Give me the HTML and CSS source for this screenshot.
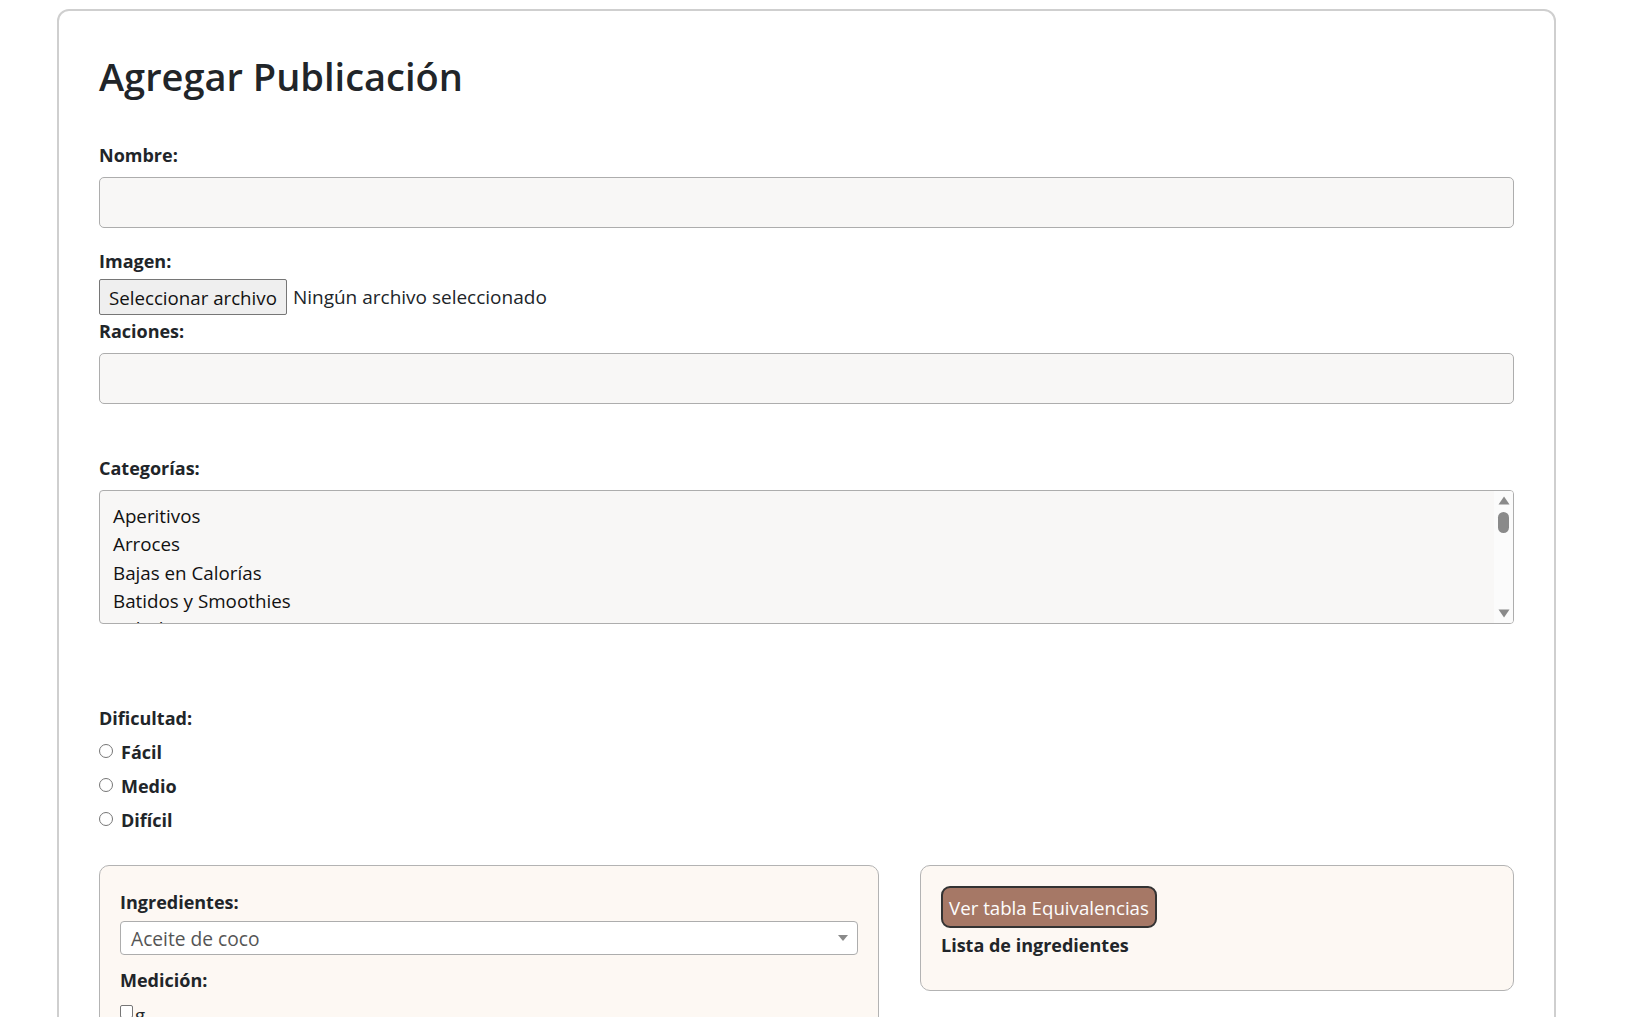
FILE: index.html
```html
<!DOCTYPE html>
<html lang="es">
<head>
<meta charset="utf-8">
<title>Agregar Publicación</title>
<link rel="stylesheet" href="styles.css">
</head>
<body>
<div class="card">
  <h1 class="title">Agregar Publicación</h1>
  <form class="form">
    <label class="lbl lbl-field" for="nombre">Nombre:</label>
    <input class="field field-nombre" id="nombre" type="text">

    <label class="lbl lbl-file">Imagen:</label>
    <div class="file-row">
      <span class="file-btn">Seleccionar archivo</span>
      <span class="file-name">Ningún archivo seleccionado</span>
    </div>

    <label class="lbl lbl-field" for="raciones">Raciones:</label>
    <input class="field field-raciones" id="raciones" type="text">

    <label class="lbl lbl-field">Categorías:</label>
    <div class="listbox" role="listbox">
      <div class="options">
        <div class="option">Aperitivos</div>
        <div class="option">Arroces</div>
        <div class="option">Bajas en Calorías</div>
        <div class="option">Batidos y Smoothies</div>
        <div class="option">Bebidas</div>
        <div class="option">Carnes</div>
      </div>
      <div class="scrollbar">
        <svg class="sb-arrow" width="12" height="9" viewBox="0 0 12 9"><path d="M6 0.5 L11.5 8.5 L0.5 8.5 Z" fill="#8a8a8a"/></svg>
        <div class="sb-thumb"></div>
        <div class="sb-space"></div>
        <svg class="sb-arrow" width="12" height="9" viewBox="0 0 12 9"><path d="M0.5 0.5 L11.5 0.5 L6 8.5 Z" fill="#8a8a8a"/></svg>
      </div>
    </div>

    <div class="lbl lbl-dif">Dificultad:</div>
    <div class="radios">
      <label class="radio-row"><span class="radio"></span>Fácil</label>
      <label class="radio-row"><span class="radio"></span>Medio</label>
      <label class="radio-row"><span class="radio"></span>Difícil</label>
    </div>

    <div class="panels">
      <div class="panel panel-ing">
        <div class="lbl lbl-ing">Ingredientes:</div>
        <div class="dropdown">
          <span class="dropdown-text">Aceite de coco</span>
          <svg class="dropdown-arrow" width="10" height="6" viewBox="0 0 10 6"><path d="M0 0 L10 0 L5 6 Z" fill="#8a8a8a"/></svg>
        </div>
        <div class="lbl lbl-med">Medición:</div>
        <div class="checks">
          <label class="check-row"><span class="check"></span>g</label>
          <label class="check-row"><span class="check"></span>kg</label>
          <label class="check-row"><span class="check"></span>ml</label>
        </div>
      </div>
      <div class="panel panel-eq">
        <button type="button" class="eq-btn">Ver tabla Equivalencias</button>
        <div class="lbl lbl-list">Lista de ingredientes</div>
      </div>
    </div>
  </form>
</div>
</body>
</html>
```

FILE: styles.css
```css
html {
  scrollbar-width: none;
}

body {
  margin: 0;
  background: #ffffff;
  color: #212529;
  font-family: "Open Sans", "Noto Sans", sans-serif;
}

.card {
  box-sizing: border-box;
  width: 1499px;
  margin: 9px 0 0 57px;
  border: 2px solid #cfcfcf;
  border-radius: 12px;
  padding: 41px 40px 60px 40px;
}

.title {
  margin: 0 0 43px 0;
  font-size: 38px;
  line-height: 48px;
  font-weight: 600;
}

.form {
  display: flex;
  flex-direction: column;
}

.lbl {
  display: block;
  font-size: 18px;
  line-height: 24px;
  font-weight: 700;
}

.lbl-field {
  margin-bottom: 10px;
}

.lbl-file {
  margin-bottom: 6px;
}

.field {
  box-sizing: border-box;
  height: 51px;
  width: 100%;
  margin: 0;
  border: 1px solid #adadad;
  border-radius: 5px;
  background: #f8f7f6;
}

.field-nombre {
  margin-bottom: 21px;
}

.field-raciones {
  margin-bottom: 52px;
}

.file-row {
  display: flex;
  align-items: center;
  gap: 6px;
  height: 36px;
  margin-bottom: 4px;
}

.file-btn {
  box-sizing: border-box;
  height: 36px;
  display: flex;
  align-items: center;
  padding: 0 9px;
  background: #efefef;
  border: 1px solid #767676;
  border-radius: 2px;
  color: #111;
  font-size: 18.7px;
}

.file-name {
  color: #212529;
  font-size: 19px;
}

.listbox {
  box-sizing: border-box;
  height: 134px;
  display: flex;
  border: 1px solid #adadad;
  border-radius: 4px;
  background: #f8f7f6;
  overflow: hidden;
  margin-bottom: 82px;
}

.options {
  flex: 1;
  padding: 11px 0 0 13px;
  overflow: hidden;
  font-size: 18.8px;
}

.option {
  line-height: 28.33px;
  color: #111;
}

.scrollbar {
  width: 19px;
  display: flex;
  flex-direction: column;
  align-items: center;
  padding: 5px 0;
  box-sizing: border-box;
  background: #fbfbfb;
}

.sb-arrow {
  display: block;
  flex: none;
}

.sb-thumb {
  width: 11px;
  height: 21px;
  margin-top: 7px;
  border-radius: 6px;
  background: #8a8a8a;
}

.sb-space {
  flex: 1;
}

.lbl-dif {
  margin-bottom: 5px;
}

.radios {
  display: flex;
  flex-direction: column;
  margin-bottom: 28px;
}

.radio-row {
  height: 34px;
  display: flex;
  align-items: center;
  gap: 8px;
  font-size: 18px;
  font-weight: 700;
}

.radio {
  box-sizing: border-box;
  width: 14px;
  height: 14px;
  border: 1px solid #767676;
  border-radius: 50%;
  background: #fff;
  margin-top: -2px;
}

.panels {
  display: grid;
  grid-template-columns: 780px 1fr;
  column-gap: 41px;
  align-items: start;
}

.panel {
  border: 1px solid #b3b3b3;
  border-radius: 10px;
  background: #fdf8f3;
}

.panel-ing {
  padding: 24px 20px 40px 20px;
}

.lbl-ing {
  margin-bottom: 7px;
}

.dropdown {
  box-sizing: border-box;
  height: 34px;
  display: flex;
  align-items: center;
  justify-content: space-between;
  padding: 0 9px 0 10px;
  background: #ffffff;
  border: 1px solid #adadad;
  border-radius: 4px;
  margin-bottom: 13px;
}

.dropdown-text {
  font-size: 19.2px;
  color: #555;
}

.dropdown-arrow {
  display: block;
}

.lbl-med {
  margin-bottom: 13px;
}

.checks {
  display: flex;
  flex-direction: column;
  gap: 8px;
}

.check-row {
  display: flex;
  align-items: flex-start;
  gap: 2px;
  font-size: 18.5px;
  line-height: 20px;
}

.check {
  box-sizing: border-box;
  width: 13px;
  height: 13px;
  border: 1px solid #767676;
  border-radius: 2px;
  background: #fff;
}

.panel-eq {
  padding: 20px 20px 33px 20px;
}

.eq-btn {
  display: block;
  box-sizing: border-box;
  height: 42px;
  padding: 0 6px;
  border: 2px solid #333;
  border-radius: 9px;
  background: #a67866;
  color: #fdfdfd;
  font-family: "Open Sans", "Noto Sans", sans-serif;
  font-size: 18.7px;
  margin-bottom: 5px;
}
```
